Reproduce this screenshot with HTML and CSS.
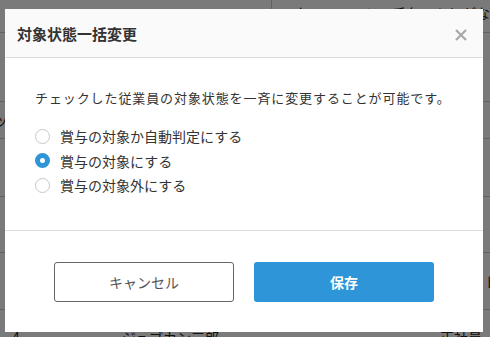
FILE: index.html
```html
<!DOCTYPE html>
<html lang="ja">
<head>
    <meta charset="UTF-8">
    <title>対象状態一括変更</title>
    <link rel="stylesheet" href="styles.css">
</head>
<body>

    <div class="page">
        <div class="page-row row-top">
            <span class="cell-gap"></span>
            <span class="cell-head">スタッフコード　氏名　ふりがな</span>
        </div>
        <div class="page-row row-a"></div>
        <div class="page-row row-b"><span class="cell-left">ッ</span></div>
        <div class="page-row row-c"></div>
        <div class="page-row row-d"></div>
        <div class="page-row row-e"><span class="cell-right">ト</span></div>
        <div class="page-row row-f">
            <span class="cell-no">4</span>
            <span class="cell-name">ジュブカン三郎</span>
            <span class="cell-type">正社員</span>
        </div>
    </div>

    <div class="overlay">
        <div class="modal">
            <div class="modal-header">
                <h2>対象状態一括変更</h2>
                <svg class="close" width="12" height="12" viewBox="0 0 12 12">
                    <path d="M1 1 L11 11 M11 1 L1 11" stroke="#a8a8a8" stroke-width="2.2" fill="none"/>
                </svg>
            </div>
            <div class="modal-body">
                <p>チェックした従業員の対象状態を一斉に変更することが可能です。</p>
                <label class="radio"><span class="dot"></span>賞与の対象か自動判定にする</label>
                <label class="radio"><span class="dot checked"></span>賞与の対象にする</label>
                <label class="radio"><span class="dot"></span>賞与の対象外にする</label>
            </div>
            <div class="modal-footer">
                <button class="btn btn-cancel">キャンセル</button>
                <button class="btn btn-save">保存</button>
            </div>
        </div>
    </div>

</body>
</html>
```

FILE: styles.css
```css
body {
    margin: 0;
    font-family: "Noto Sans CJK JP", "Noto Sans", sans-serif;
    color: #333;
    background-color: #fff;
    overflow: hidden;
}
.page {
    width: 490px;
    height: 337px;
    font-size: 14px;
    color: #222;
    overflow: hidden;
}
.page-row {
    display: flex;
    align-items: center;
    border-bottom: 1px solid #ccc;
}
.row-top {
    height: 32px;
    align-items: flex-start;
}
.cell-gap {
    width: 312px;
    height: 32px;
    border-right: 1px solid #ccc;
    margin-right: 8px;
}
.cell-head {
    margin-top: 3px;
    white-space: nowrap;
}
.row-a { height: 68px; }
.row-b { height: 36px; }
.cell-left { margin-left: -6px; }
.row-c { height: 57px; }
.row-d { height: 55px; }
.row-e { height: 56px; justify-content: flex-end; }
.cell-right { margin-right: -8px; }
.row-f {
    height: 40px;
    align-items: flex-start;
    border-bottom: none;
}
.cell-no { width: 110px; padding-left: 12px; margin-top: 17px; }
.cell-name { flex: 1; margin-top: 17px; }
.cell-type { margin-right: 8px; margin-top: 17px; }

.overlay {
    position: fixed;
    inset: 0;
    background-color: rgba(0, 0, 0, 0.52);
    padding: 9px 7px 5px 5px;
}
.modal {
    background-color: #fff;
    height: 323px;
    display: flex;
    flex-direction: column;
}
.modal-header {
    background-color: #fafafa;
    border-bottom: 1px solid #ddd;
    height: 48px;
    display: flex;
    align-items: center;
    justify-content: space-between;
    padding: 0 16px 0 12px;
}
.modal-header h2 {
    margin: 0;
    font-size: 15px;
    font-weight: bold;
    color: #333;
}
.close {
    margin-top: 3px;
}
.modal-body {
    padding: 30px 30px 0;
    height: 142px;
    border-bottom: 1px solid #ddd;
}
.modal-body p {
    margin: 0 0 16px;
    font-size: 13px;
    letter-spacing: 0.9px;
    line-height: 20px;
}
.radio {
    display: flex;
    align-items: center;
    font-size: 14px;
    height: 24.5px;
}
.dot {
    width: 15px;
    height: 15px;
    border: 1px solid #c8c8c8;
    border-radius: 50%;
    margin-right: 10px;
    box-sizing: border-box;
    background-color: #fff;
}
.dot.checked {
    border: 5px solid #2d95d8;
    background-color: #fff;
}
.modal-footer {
    flex: 1;
    display: flex;
    justify-content: center;
    align-items: center;
    gap: 20px;
}
.btn {
    width: 180px;
    height: 40px;
    font-family: inherit;
    font-size: 14px;
    border-radius: 3px;
}
.btn-cancel {
    background-color: #fff;
    border: 1px solid #666;
    color: #555;
}
.btn-save {
    background-color: #2d95d8;
    border: none;
    color: #fff;
    font-weight: bold;
}
```
